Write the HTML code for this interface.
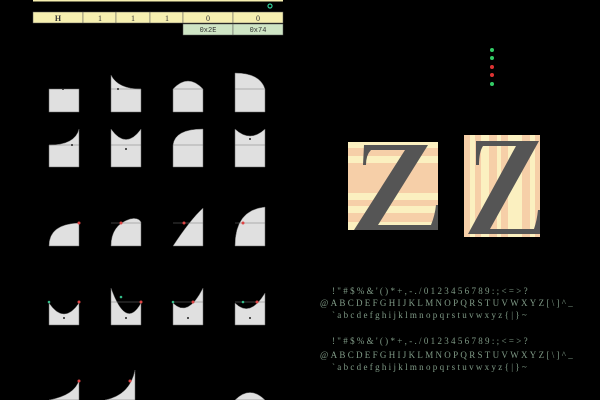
<!DOCTYPE html>
<html><head><meta charset="utf-8"><style>
html,body{margin:0;padding:0;background:#000;width:600px;height:400px;overflow:hidden}
svg{display:block}
.t{font-family:"Liberation Serif",serif;font-size:9px;fill:#7f9a86;letter-spacing:2.3px}
</style></head><body>
<svg width="600" height="400" viewBox="0 0 600 400" xmlns="http://www.w3.org/2000/svg">
<rect x="33" y="0" width="250" height="1.5" fill="#f6efb0"/>
<g stroke="#555" stroke-width="0.5">
<rect x="33" y="12" width="50" height="11" fill="#f6efb0"/>
<rect x="83" y="12" width="33" height="11" fill="#f6efb0"/>
<rect x="116" y="12" width="34" height="11" fill="#f6efb0"/>
<rect x="150" y="12" width="33" height="11" fill="#f6efb0"/>
<rect x="183" y="12" width="50" height="11" fill="#f6efb0"/>
<rect x="233" y="12" width="50" height="11" fill="#f6efb0"/>
<rect x="183" y="24" width="50" height="11" fill="#cfe5c5"/>
<rect x="233" y="24" width="50" height="11" fill="#cfe5c5"/>
</g>
<g font-family="Liberation Serif,serif" font-size="8" fill="#333" text-anchor="middle">
<text x="58" y="21" font-weight="bold">H</text><text x="100" y="21">1</text><text x="133" y="21">1</text><text x="167" y="21">1</text><text x="208" y="21">0</text><text x="258" y="21">0</text>
</g>
<g font-family="Liberation Mono,monospace" font-size="7" fill="#333" text-anchor="middle"><text x="208" y="32">0x2E</text><text x="258" y="32">0x74</text></g>
<circle cx="270" cy="6" r="2" fill="none" stroke="#3c9" stroke-width="1.2"/>
<g fill="#e0e0e0" stroke="#666" stroke-width="0.5">
<rect x="49" y="89" width="30" height="23"/>
<path d="M111 75 Q118 89 141 89 V112 H111Z"/>
<path d="M173 89 Q188 73 203 89 V112 H173Z"/>
<path d="M235 73 Q260 73 265 89 V112 H235Z"/>
<path d="M49 145 Q75 145 79 129 V167 H49Z"/>
<path d="M111 129 Q126 150 141 129 V167 H111Z"/>
<path d="M173 145 Q175 129 203 129 V167 H173Z"/>
<path d="M235 129 Q250 143 265 129 V167 H235Z"/>
<path d="M49 246 Q49 224 79 223 V246Z"/>
<path d="M111 246 Q111 225 130 219 Q138 217 141 222 V246H111Z"/>
<path d="M173 246 Q190 220 203 208 V246Z"/>
<path d="M235 246 Q235 210 265 207 V246Z"/>
<path d="M49 303 Q64 325 79 303 V325 H49Z"/>
<path d="M111 288 Q126 330 141 303 V325 H111Z"/>
<path d="M173 303 Q188 318 203 288 V325 H173Z"/>
<path d="M235 303 Q250 318 265 293 V325 H235Z"/>
<path d="M49 400 Q75 395 79 380 V400Z"/>
<path d="M105 400 Q130 395 135 370 V400Z"/>
<path d="M235 400 Q250 385 265 400Z"/>
</g>
<g stroke="#777" stroke-width="0.6"><line x1="111" y1="89" x2="141" y2="89"/><line x1="173" y1="89" x2="203" y2="89"/><line x1="235" y1="89" x2="265" y2="89"/><line x1="49" y1="145" x2="79" y2="145"/><line x1="111" y1="145" x2="141" y2="145"/><line x1="173" y1="145" x2="203" y2="145"/><line x1="235" y1="145" x2="265" y2="145"/><line x1="111" y1="223" x2="141" y2="223"/><line x1="173" y1="223" x2="203" y2="223"/><line x1="235" y1="223" x2="265" y2="223"/><line x1="111" y1="302" x2="141" y2="302"/><line x1="173" y1="302" x2="203" y2="302"/><line x1="235" y1="302" x2="265" y2="302"/></g>
<g fill="#222"><circle cx="63" cy="89" r="1"/><circle cx="118" cy="89" r="1"/><circle cx="72" cy="145" r="1"/><circle cx="126" cy="149" r="1"/><circle cx="250" cy="139" r="1"/><circle cx="64" cy="318" r="1"/><circle cx="126" cy="318" r="1"/><circle cx="188" cy="318" r="1"/><circle cx="250" cy="318" r="1"/></g>
<g fill="#d44"><circle cx="79" cy="223" r="1.5"/><circle cx="121" cy="223" r="1.5"/><circle cx="184" cy="223" r="1.5"/><circle cx="243" cy="223" r="1.5"/><circle cx="79" cy="302" r="1.5"/><circle cx="141" cy="302" r="1.5"/><circle cx="193" cy="302" r="1.5"/><circle cx="257" cy="302" r="1.5"/><circle cx="79" cy="381" r="1.5"/><circle cx="130" cy="381" r="1.5"/></g>
<g fill="#3b8"><circle cx="49" cy="302" r="1.3"/><circle cx="121" cy="297" r="1.3"/><circle cx="173" cy="302" r="1.3"/><circle cx="243" cy="302" r="1.3"/></g>
<circle cx="492" cy="50" r="2" fill="#3c6"/><circle cx="492" cy="58" r="2" fill="#3c6"/><circle cx="492" cy="67" r="2" fill="#d33"/><circle cx="492" cy="75" r="2" fill="#d33"/><circle cx="492" cy="84" r="2" fill="#3c6"/>
<rect x="348" y="142" width="90" height="88" fill="#fbf0c0"/>
<g fill="#f6cfa8"><rect x="348" y="148" width="90" height="8"/><rect x="348" y="163" width="90" height="30"/><rect x="348" y="200" width="90" height="6"/><rect x="348" y="213" width="90" height="9"/></g>
<rect x="464" y="135" width="76" height="102" fill="#f6cfa8"/>
<g fill="#fbf0c0"><rect x="470" y="135" width="5" height="102"/><rect x="481" y="135" width="8" height="102"/><rect x="497" y="135" width="4" height="102"/><rect x="508" y="135" width="14" height="102"/><rect x="530" y="135" width="5" height="102"/></g>
<path d="M364 145 H428 L378 225 H431 Q435 215 436 205 H438 V230 H354 L405 150 H371 Q366 155 366 165 H363 Z" fill="#555"/>
<path d="M476 141 H539 L490 229 H534 Q537 220 538 210 H540 V234 H468 L516 146 H483 Q479 152 479 165 H476 Z" fill="#555"/>
<text class="t" x="332" y="294">!"#$%&amp;'()*+,-./0123456789:;&lt;=&gt;?</text>
<text class="t" x="320" y="306">@ABCDEFGHIJKLMNOPQRSTUVWXYZ[\]^_</text>
<text class="t" x="332" y="318">`abcdefghijklmnopqrstuvwxyz{|}~</text>
<text class="t" x="332" y="344">!"#$%&amp;'()*+,-./0123456789:;&lt;=&gt;?</text>
<text class="t" x="320" y="358">@ABCDEFGHIJKLMNOPQRSTUVWXYZ[\]^_</text>
<text class="t" x="332" y="370">`abcdefghijklmnopqrstuvwxyz{|}~</text>
</svg>
</body></html>
